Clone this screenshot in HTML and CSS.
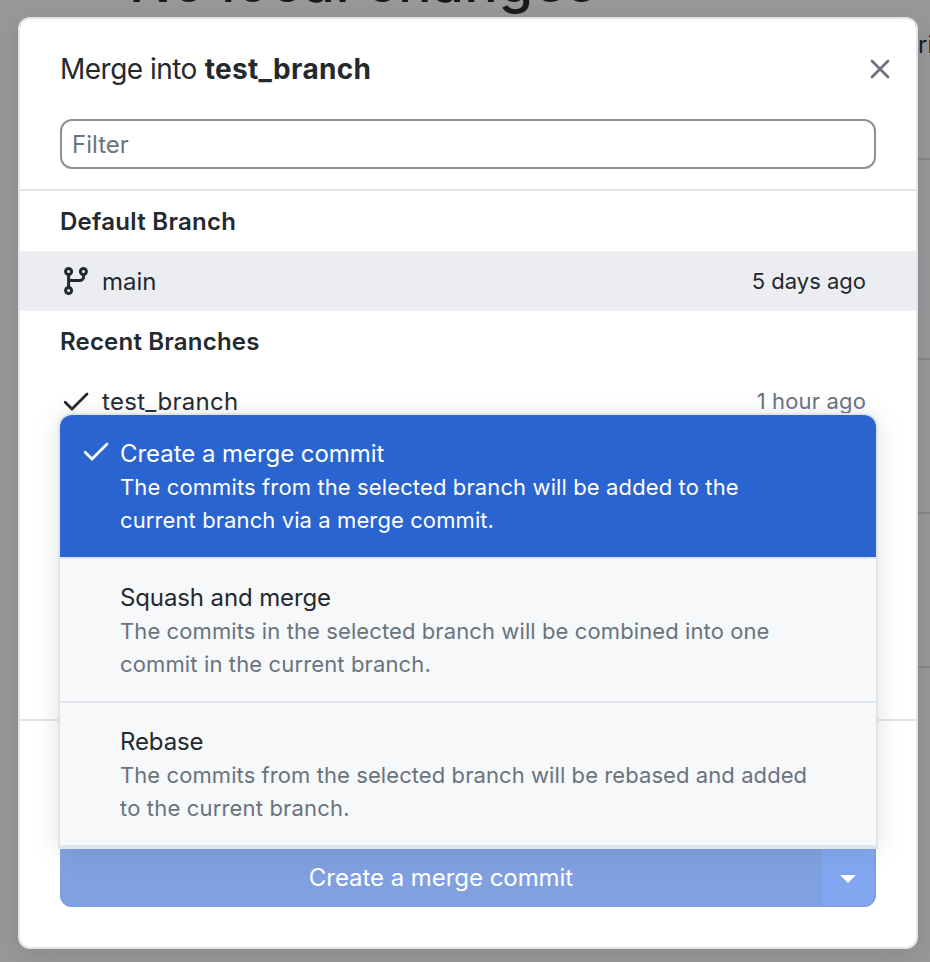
FILE: index.html
```
<!DOCTYPE html>
<html lang="en">
<head>
<meta charset="utf-8">
<title>Merge into test_branch</title>
<link rel="stylesheet" href="styles.css">
</head>
<body>
<div class="backdrop">
  <h1 class="backdrop-title">No local changes</h1>
  <div class="backdrop-side">
    <p class="side-text">ri</p>
    <div class="side-rule r1"></div>
    <div class="side-rule r2"></div>
    <div class="side-rule r3"></div>
    <div class="side-rule r4"></div>
  </div>
</div>
<main class="dialog">
  <header class="dialog-header">
    <h2 class="title"><span class="title-lead">Merge into</span> <strong>test_branch</strong></h2>
    <svg class="close" viewBox="0 0 20 20"><path d="M2 2 18 18M18 2 2 18"/></svg>
  </header>
  <div class="filter"><span>Filter</span></div>
  <section class="branches">
    <h3 class="group g1"><span>Default Branch</span></h3>
    <div class="row selected">
      <svg class="icon" viewBox="0 0 32 32"><g class="stroke"><circle cx="8.6" cy="6.5" r="3"/><circle cx="23.4" cy="6.5" r="3"/><circle cx="8.6" cy="25.5" r="3"/><path d="M8.6 9.5v13M8.6 15.6h11a4 4 0 0 0 4-4V9.5"/></g></svg>
      <span class="name">main</span><span class="time">5 days ago</span>
    </div>
    <h3 class="group g2"><span>Recent Branches</span></h3>
    <div class="row current">
      <svg class="icon" viewBox="0 0 32 32"><path class="check" d="M5.2 17.2 12 24 27 9"/></svg>
      <span class="name">test_branch</span><span class="time">1 hour ago</span>
    </div>
  </section>
  <footer class="dialog-footer">
    <div class="split-button">
      <button class="merge"><span>Create a merge commit</span></button>
      <button class="toggle" aria-label="Merge options"><svg viewBox="0 0 16 8"><path d="M0 0H16L8 8Z"/></svg></button>
    </div>
    <div class="menu">
      <div class="option active">
        <svg class="option-check" viewBox="0 0 32 32"><path class="check" d="M5.2 17.2 12 24 27 9"/></svg>
        <h4 class="o1"><span>Create a merge commit</span></h4>
        <p><span class="d1">The commits from the selected branch will be added to the</span><br><span class="d2">current branch via a merge commit.</span></p>
      </div>
      <div class="option">
        <h4 class="o2"><span>Squash and merge</span></h4>
        <p><span class="d3">The commits in the selected branch will be combined into one</span><br><span class="d4">commit in the current branch.</span></p>
      </div>
      <div class="option">
        <h4 class="o3"><span>Rebase</span></h4>
        <p><span class="d5">The commits from the selected branch will be rebased and added</span><br><span class="d6">to the current branch.</span></p>
      </div>
    </div>
  </footer>
</main>
</body>
</html>
```
FILE: styles.css
```
* { box-sizing: border-box; }
body {
  margin: 0;
  width: 930px;
  height: 962px;
  position: relative;
  overflow: hidden;
  background: #999;
  color: #24292e;
  font-family: Inter, "Liberation Sans", sans-serif;
  font-size: 24px;
}
h1, h2, h3, h4, p { margin: 0; font-weight: 400; }
svg { display: block; flex: none; }
.backdrop { position: absolute; inset: 0; overflow: hidden; }
.backdrop-title {
  position: absolute;
  left: 129px;
  top: -52px;
  color: #16191c;
  font-size: 56px;
  line-height: 68px;
  font-weight: 500;
  letter-spacing: .4px;
  white-space: nowrap;
}
.backdrop-side { margin-left: 918px; padding-top: 30px; height: 962px; }
.side-text { height: 128px; color: #16191c; line-height: 30px; font-size: 24px; }
.side-rule { height: 2px; background: #888; }
.r1 { margin-bottom: 198px; }
.r2 { margin-bottom: 152px; }
.r3 { margin-bottom: 152px; }
.dialog {
  position: absolute;
  left: 18px;
  top: 17px;
  width: 900px;
  height: 932px;
  display: flex;
  flex-direction: column;
  background: #fff;
  border: 2px solid #e1e4e8;
  border-radius: 12px;
  box-shadow: 0 6px 28px rgba(68, 77, 86, .22);
}
.dialog-header {
  height: 100px;
  padding: 0 26px 0 40px;
  display: flex;
  align-items: center;
  justify-content: space-between;
}
.title { font-size: 28px; line-height: 34px; white-space: nowrap; }
.title-lead { letter-spacing: -.52px; }
.title strong { font-weight: 700; letter-spacing: .3px; }
.close { width: 20px; height: 20px; fill: none; stroke: #6a737d; stroke-width: 2.8; stroke-linecap: round; }
.filter {
  height: 50px;
  flex: none;
  margin: 0 40px 20px;
  padding: 0 10px;
  display: flex;
  align-items: center;
  border: 2px solid #8a9199;
  border-radius: 12px;
  color: #6a737d;
}
.branches { height: 532px; flex: none; border: solid #e1e4e8; border-width: 2px 0; }
.group, .row { height: 60px; padding: 0 50px 0 40px; display: flex; align-items: center; white-space: nowrap; }
.group { font-size: 24px; font-weight: 600; }
.g1 { letter-spacing: .28px; }
.g2 { letter-spacing: .2px; }
.selected { background: #ecedf1; }
.icon { width: 32px; height: 32px; margin-right: 10px; }
.stroke { fill: none; stroke: #24292e; stroke-width: 3; }
.check { fill: none; stroke: currentColor; stroke-width: 2.8; stroke-linecap: round; stroke-linejoin: miter; }
.name { font-size: 24px; }
.current .name { letter-spacing: .3px; }
.time { margin-left: auto; font-size: 22px; color: #6a737d; }
.current .time { letter-spacing: .15px; }
.selected .time { color: #24292e; }
.dialog-footer { position: relative; flex: 1; padding: 126px 40px 40px; }
.split-button { height: 60px; display: flex; border-radius: 0 0 12px 12px; overflow: hidden; background: #80a0e0; }
.split-button button { border: 0; padding: 0; color: #fff; font: inherit; letter-spacing: -.05px; }
.split-button .merge { flex: 1; background: #80a0e0; }
.split-button .toggle { width: 54px; padding-top: 5px; display: grid; place-items: center; background: #82a7f0; border: solid #80a0e0; border-width: 0 2px 2px 0; border-bottom-right-radius: 12px; }
.toggle svg { width: 16px; height: 8px; fill: #fff; }
.menu {
  position: absolute;
  left: 38px;
  bottom: 98px;
  width: 820px;
  height: 436px;
  border: 2px solid #e1e4e8;
  border-radius: 14px 14px 0 0;
  overflow: hidden;
  background: #f6f8fa;
  box-shadow: 0 3px 24px rgba(100, 110, 120, .2);
}
.option { position: relative; height: 144px; padding: 21px 0 0 60px; border-bottom: 2px solid #e1e4e8; white-space: nowrap; }
.option h4 { height: 35px; line-height: 36px; font-size: 24px; letter-spacing: -.05px; }
.option .o2, .option .o3 { letter-spacing: -.12px; }
.option p { font-size: 22px; line-height: 33px; color: #6a737d; }
.d1 { letter-spacing: .12px; }
.d2, .d3 { letter-spacing: .1px; }
.d4 { letter-spacing: .13px; }
.d5 { letter-spacing: .08px; }
.d6 { letter-spacing: .17px; }
.option.active { background: #2a64d0; }
.option.active, .option.active p { color: #fff; }
.option-check { position: absolute; left: 20px; top: 20px; width: 32px; height: 32px; }
```
